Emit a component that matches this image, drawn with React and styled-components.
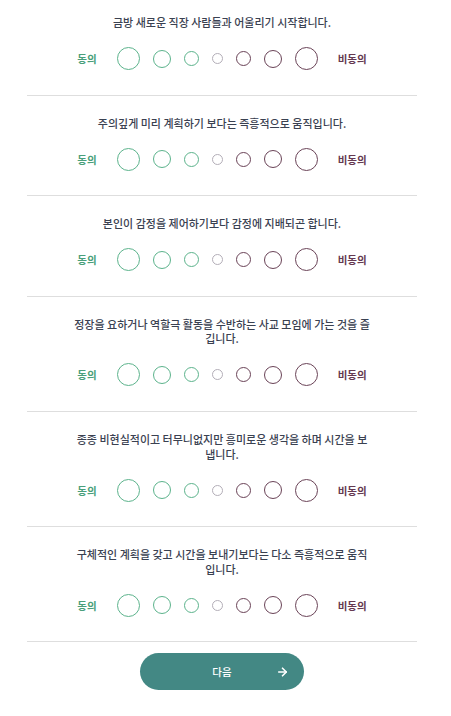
import React from 'react'
import styled, { createGlobalStyle } from 'styled-components'
import { ArrowRight } from 'lucide-react'

const GlobalStyle = createGlobalStyle`
    html, body {
        margin: 0;
        padding: 0;
        background: #ffffff;
        font-family: "Noto Sans CJK KR", "Noto Sans", sans-serif;
    }
`

const Page = styled.div`
    width: 390px;
    margin-left: 27px;
    display: flex;
    flex-direction: column;
    align-items: stretch;
`

const Section = styled.div`
    padding: 20px 0 22px;
    border-bottom: 1px solid #dedede;
    display: flex;
    flex-direction: column;
    align-items: center;

    &:first-child {
        padding-top: 15px;
    }
`

const Question = styled.p`
    margin: 0 0 15px;
    width: 300px;
    text-align: center;
    font-size: 11px;
    line-height: 14.6px;
    font-weight: 500;
    color: #3a4151;
    word-break: break-all;
`

const Row = styled.div`
    height: 28px;
    display: flex;
    align-items: center;
    justify-content: center;
    gap: 20px;
`

const Label = styled.span`
    font-size: 10.5px;
    font-weight: 700;
    color: ${p => p.$tone === 'agree' ? '#4a9f7b' : '#653a51'};
`

const Scale = styled.div`
    display: flex;
    align-items: center;
    gap: 13px;
`

const Dot = styled.button`
    box-sizing: border-box;
    width: ${p => p.$size}px;
    height: ${p => p.$size}px;
    padding: 0;
    border-radius: 50%;
    border: 1.5px solid ${p => p.$color};
    background: transparent;
    cursor: pointer;
`

const Footer = styled.div`
    display: flex;
    justify-content: center;
    padding: 11px 0 26px;
`

const NextButton = styled.button`
    position: relative;
    width: 164px;
    height: 37px;
    border: none;
    border-radius: 19px;
    background: #438884;
    color: #ffffff;
    font-family: inherit;
    font-size: 10.5px;
    font-weight: 500;
    display: flex;
    align-items: center;
    justify-content: center;
    cursor: pointer;

    svg {
        position: absolute;
        right: 15px;
        top: 50%;
        transform: translateY(-50%);
    }
`

const GREEN = '#5cb38c'
const GREY = '#b3aeb8'
const PURPLE = '#6a4357'

const dots = [
    { size: 23, color: GREEN },
    { size: 18, color: GREEN },
    { size: 15, color: GREEN },
    { size: 11, color: GREY },
    { size: 15, color: PURPLE },
    { size: 18, color: PURPLE },
    { size: 23, color: PURPLE },
]

const questions = [
    '금방 새로운 직장 사람들과 어울리기 시작합니다.',
    '주의깊게 미리 계획하기 보다는 즉흥적으로 움직입니다.',
    '본인이 감정을 제어하기보다 감정에 지배되곤 합니다.',
    '정장을 요하거나 역할극 활동을 수반하는 사교 모임에 가는 것을 즐깁니다.',
    '종종 비현실적이고 터무니없지만 흥미로운 생각을 하며 시간을 보냅니다.',
    '구체적인 계획을 갖고 시간을 보내기보다는 다소 즉흥적으로 움직입니다.',
]

const App = () => {
    return (
        <>
            <GlobalStyle />
            <Page>
                {questions.map((q, i) => (
                    <Section key={i}>
                        <Question>{q}</Question>
                        <Row>
                            <Label $tone='agree'>동의</Label>
                            <Scale>
                                {dots.map((d, j) => (
                                    <Dot key={j} $size={d.size} $color={d.color} aria-label={`${j + 1}`} />
                                ))}
                            </Scale>
                            <Label $tone='disagree'>비동의</Label>
                        </Row>
                    </Section>
                ))}
                <Footer>
                    <NextButton>
                        다음
                        <ArrowRight size={13} strokeWidth={3} />
                    </NextButton>
                </Footer>
            </Page>
        </>
    )
}

export default App
